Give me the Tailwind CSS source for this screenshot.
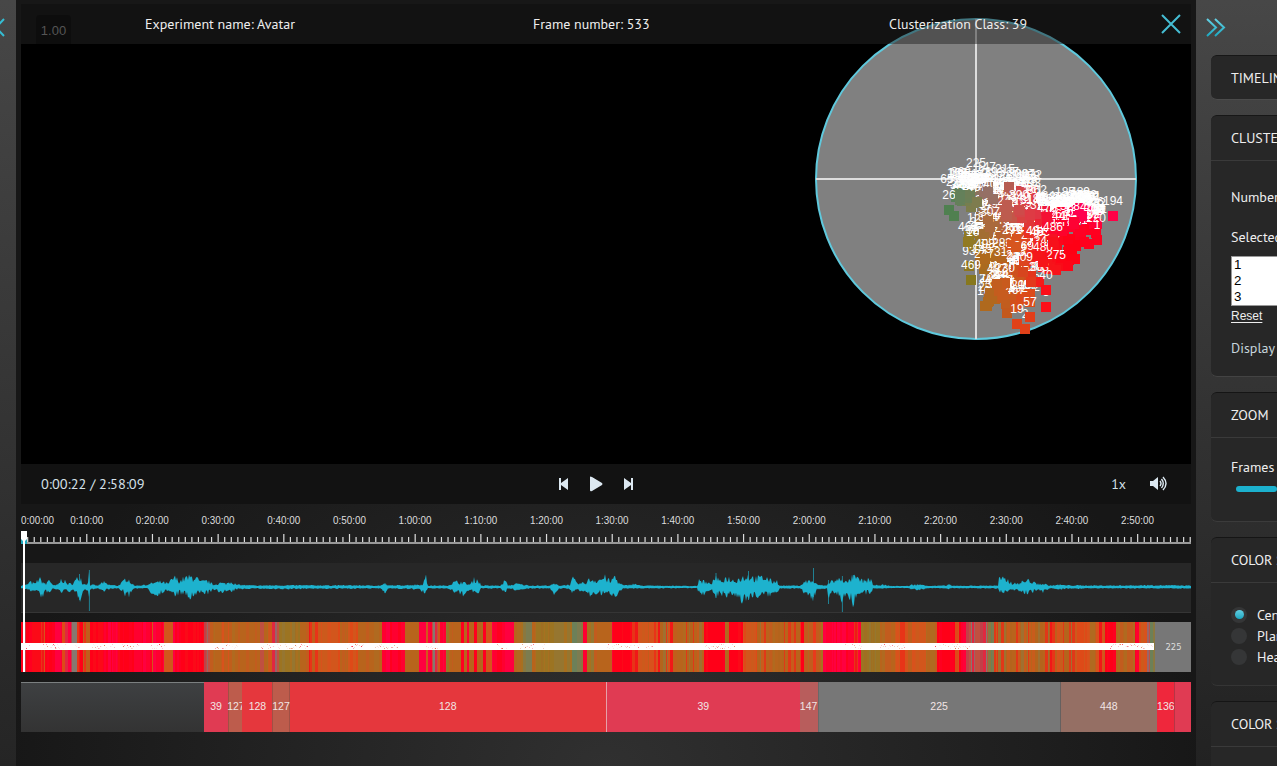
<!DOCTYPE html>
<html lang="en">
<head>
<meta charset="utf-8">
<title>Experiment viewer</title>
<script src="https://cdn.jsdelivr.net/npm/@tailwindcss/browser@4"></script>
</head>
<body class="flex h-[766px] w-[1277px] overflow-hidden bg-[#1b1b1b] font-['PT_Sans','Noto_Sans',sans-serif] text-sm text-[#eeeeee]">
<aside class="flex w-4 shrink-0 overflow-hidden bg-gradient-to-b from-[#474747] to-[#252525]">
  <svg class="mt-[17px] h-5 w-5 shrink-0 overflow-visible" fill="none" stroke="#35bdd3" stroke-width="2"><path d="M4 2L-4 10.5L4 19"/></svg>
</aside>
<main class="relative flex w-[1180px] shrink-0 flex-col bg-[radial-gradient(ellipse_600px_440px_at_50%_100%,#303030,#171717)] px-[5px] pt-1">
  <section class="relative h-[460px] bg-black">
    <svg id="plot" class="absolute inset-0" width="1170" height="460" viewBox="21 4 1170 460">
      <circle cx="976" cy="179" r="160" fill="#808080" stroke="#5fc9dd" stroke-width="2"/>
      <path d="M976 19V339M816 179H1136" stroke="#dddddd" stroke-width="2"/>
      <g id="dots" font-family="Liberation Sans, sans-serif" font-size="12" fill="#ffffff" text-anchor="middle"></g>
    </svg>
    <header class="relative h-10 bg-[#242424]/50">
      <div class="absolute top-[11px] left-[15px] h-[29px] w-[35px] rounded-t bg-[#0d0d0d] pt-[6px] text-center font-['Liberation_Sans',sans-serif] text-[13px] leading-5 text-[#555]">1.00</div>
      <div class="grid h-full grid-cols-[398px_345px_387px_1fr] items-center text-center leading-5">
        <div><svg width="150" height="20" class="inline overflow-visible"><text x="0" y="14" fill="#eee" textLength="150" lengthAdjust="spacingAndGlyphs">Experiment name: Avatar</text></svg></div>
        <div><svg width="117" height="20" class="inline overflow-visible"><text x="0" y="14" fill="#eee" textLength="116.500" lengthAdjust="spacingAndGlyphs">Frame number: 533</text></svg></div>
        <div><svg width="138" height="20" class="inline overflow-visible"><text x="0" y="14" fill="#eee" textLength="138" lengthAdjust="spacingAndGlyphs">Clusterization Class: 39</text></svg></div>
        <svg class="ml-[9px]" width="22" height="22" fill="none" stroke="#45bdd3" stroke-width="2"><path d="M2 2L20 20M20 2L2 20"/></svg>
      </div>
    </header>
  </section>
  <section class="flex h-10 items-center bg-[#121212] pl-5 pr-[23px] text-[#d5e0e8]">
    <svg width="104" height="20"><text x="0" y="15" fill="#d5e0e8" textLength="103.500" lengthAdjust="spacingAndGlyphs">0:00:22 / 2:58:09</text></svg>
    <svg class="ml-[414px]" width="78" height="16" viewBox="0 0 78 16" fill="#dce8f1"><path d="M0 2H2V7L9 2V14L2 9V14H0ZM31 1Q31 0 33 1L43 7Q44 8 43 9L33 15Q31 16 31 14ZM65 2L72 7V2H74V14H72V9L65 14Z"/></svg>
    <span class="ml-auto mr-[24px]">1x</span>
    <svg width="18" height="16" viewBox="0 0 18 16"><path d="M0 5H3L8 1V14L3 10H0Z" fill="#dce8f1"/><path d="M10 5Q12 7.5 10 10M11.5 3Q15 7.5 11.5 12M13 1Q19 7.5 13 14" fill="none" stroke="#dce8f1" stroke-width="1.4"/></svg>
  </section>
  <svg id="ruler" class="h-[59px] w-[1170px]" viewBox="21 504 1170 59" font-family="Liberation Sans, sans-serif" font-size="10.5" fill="#ddd" text-anchor="middle"></svg>
  <svg id="wave" preserveAspectRatio="none" class="mb-[9px] h-[50px] w-[1170px] border-b border-[#353535] bg-[#272727]" viewBox="21 563 1170 49"></svg>
  <svg id="stripes" class="mb-[10px] h-[50px] w-[1170px] bg-[#777]" viewBox="21 622 1170 50" shape-rendering="crispEdges"></svg>
  <div class="flex h-[50px] text-center font-['Liberation_Sans',sans-serif] text-[10.5px] leading-[49px] text-[#f1e5e5]">
    <div class="w-[182.6px] border-t border-[#7b7f80] bg-gradient-to-b from-[#3e4042] to-[#333333]"></div>
    <div class="w-[24.8px] bg-[#e03b53]">39</div>
    <div class="flex w-[14px] justify-center border-l border-[#a05045] bg-[#bd5c4c]">127</div>
    <div class="w-[30px] bg-[#e5373d]">128</div>
    <div class="flex w-[17.2px] justify-center border-x border-[#a05045] bg-[#bd5c4c]">127</div>
    <div class="w-[317.3px] border-r border-[#e6a0a8] bg-[#e5373d]">128</div>
    <div class="w-[192.700px] bg-[#e03b53]">39</div>
    <div class="flex w-[18px] justify-center bg-[#b85d5c]">147</div>
    <div class="w-[242px] border-l border-[#696969] bg-[#777777]">225</div>
    <div class="w-[97.5px] border-l border-[#65605f] bg-[#956f64]">448</div>
    <div class="w-[17px] bg-[#ef273c]">136</div>
    <div class="flex-1 border-l border-[#b63545] bg-[#e03b53]"></div>
  </div>
  <svg class="absolute top-[531px] left-[5px]" width="7" height="141"><path d="M0 6h6v7H0z" fill="#20a9be"/><path d="M0 0H6V8L4 10V141H2V10L0 8Z" fill="#fff"/></svg>
</main>
<aside class="flex min-w-0 flex-1 flex-col gap-[15px] overflow-hidden bg-gradient-to-b from-[#474747] to-[#222222] pl-[15px] leading-5 whitespace-nowrap">
  <svg class="mt-[18px] -mb-[3px] -ml-[5px] h-[21px] w-5 shrink-0" fill="none" stroke-width="2"><defs><linearGradient id="cy" gradientUnits="userSpaceOnUse" x1="0" y1="0" x2="0" y2="20"><stop stop-color="#69d3e6"/><stop offset="1" stop-color="#14a5bf"/></linearGradient></defs><path d="M1 1L10 9.5L1 18M9 1L18 9.5L9 18" stroke="url(#cy)"/></svg>
  <section class="mt-[4px] h-[45px] shrink-0 rounded-l-md border-t border-b border-t-[#171717] border-b-[#4b4b4b] bg-[#272727] py-3 pl-5">TIMELINE</section>
  <section class="h-[262px] shrink-0 rounded-l-md border-t border-b border-t-[#171717] border-b-[#434343] bg-[#272727]">
    <h2 class="h-[45px] border-b border-[#3a3a3a] pt-3 pl-5">CLUSTERS</h2>
    <div class="flex flex-col items-start pt-[26px] pl-5">
      <span>Number of clusters</span>
      <span class="mt-5">Selected</span>
      <div class="mt-[9px] h-[50px] w-[150px] border border-[#999] bg-white pl-[2px] font-['Liberation_Sans',sans-serif] text-[13.3px] leading-4 text-black"><p>1</p><p>2</p><p>3</p></div>
      <a class="mt-px font-['Liberation_Sans',sans-serif] text-xs/[18px] underline underline-offset-2">Reset</a>
      <span class="mt-[13px] text-[#c6d5dc]">Display</span>
    </div>
  </section>
  <section class="h-[130px] shrink-0 rounded-l-md border-t border-b border-t-[#151515] border-b-[#3b3b3b] bg-[#272727]">
    <h2 class="h-[45px] border-b border-[#3a3a3a] pt-3 pl-5">ZOOM</h2>
    <div class="pt-[19px] pl-5">Frames<div class="mt-[9px] ml-[5px] h-[6px] rounded-full bg-[#1cb1ce]"></div></div>
  </section>
  <section class="h-[149px] shrink-0 rounded-l-md border-t border-b border-t-[#151515] border-b-[#353535] bg-[#272727]">
    <h2 class="h-[45px] border-b border-[#3a3a3a] pt-3 pl-5">COLOR SCHEME</h2>
    <div class="flex flex-col gap-px pt-[22px] pl-5">
      <div class="flex items-center gap-[10px]"><i class="flex size-4 shrink-0 items-center justify-center rounded-full bg-[#353637]"><i class="mb-px size-[9px] rounded-full bg-gradient-to-b from-[#61cfe2] to-[#12a6c0]"></i></i>Centers</div>
      <div class="flex items-center gap-[10px]"><i class="size-4 shrink-0 rounded-full bg-[#353637]"></i>Plane</div>
      <div class="flex items-center gap-[10px]"><i class="size-4 shrink-0 rounded-full bg-[#353637]"></i>Heat</div>
    </div>
  </section>
  <section class="min-h-0 flex-1 rounded-tl-md border-t border-[#151515] bg-[#272727]">
    <h2 class="h-[45px] border-b border-[#3a3a3a] pt-3 pl-5">COLOR SCALE</h2>
  </section>
</aside>
<script>
let seed = 7;
const rnd = () => (seed = (seed * 16807) % 2147483647) / 2147483647;
const $ = id => document.getElementById(id);

// time ruler
let s = '<rect x="21" y="542" width="1170" height="2" fill="#999"/>';
for (let i = 0; i < 179; i++) {
  const x = 21 + i * 6.568, big = i % 10 === 0;
  s += `<rect x="${x - .5}" y="${big ? 534 : 537}" width="1.2" height="${big ? 8 : 5}" fill="#ddd"/>`;
  if (big) {
    const t = `${Math.floor(i / 60)}:${String(i % 60).padStart(2, '0')}:00`;
    s += `<text x="${i ? x : 37.5}" y="524" textLength="33" lengthAdjust="spacingAndGlyphs">${t}</text>`;
  }
}
$('ruler').innerHTML = s;

// audio waveform: x, extent above, extent below
const env = [[21,1,1],[27,2,2],[30,5,4],[35,3,3],[39,9,6],[43,5,12],[46,2,3],[49,9,8],[53,1,1],[58,2,3],[62,9,5],[67,3,3],[72,3,5],[76,7,6],[80,12,13],[83,3,3],[88,4,3],[89,18,25],[90,2,2],[98,1,1],[103,5,4],[108,2,2],[118,1,1],[123,5,4],[127,11,12],[130,6,7],[134,1,1],[148,2,1],[153,4,9],[161,5,6],[168,3,3],[174,10,9],[180,6,6],[184,9,8],[190,10,12],[195,11,9],[200,5,6],[208,6,6],[213,2,3],[220,4,5],[226,3,4],[231,6,6],[236,2,2],[255,1,1],[275,1.3,2],[310,1.3,1.3],[345,1.3,1.3],[380,1,1],[385,3,5],[388,1,1],[418,2,2],[422,2,4],[426,10,8],[428,1,1],[447,1,1],[455,5,5],[461,5,9],[470,2,3],[475,9,7],[479,6,5],[481,1,1],[501,1,1],[505,7,7],[508,1,1],[517,3,3],[530,1,1],[550,1,1],[554,3,7],[559,1,1],[570,2,2],[573,9,6],[577,3,3],[585,4,5],[590,8,9],[597,7,6],[605,10,8],[611,5,6],[614,12,12],[619,4,4],[624,1,1],[635,3,1.5],[640,1,1],[697,.6,.6],[699,6,6],[704,6,7],[708,3,3],[714,6,5],[716,12,10],[719,5,6],[727,10,10],[733,7,8],[740,9,15],[748,12,12],[755,9,9],[766,10,9],[771,6,8],[777,6,6],[780,1,1],[800,1,1],[806,6,8],[813,6,12],[817,2,2],[827,1,1],[828,3,17],[830,6,6],[836,6,5],[842,10,14],[847,4,6],[853,11,17],[858,8,8],[864,6,6],[871,9,8],[873,1,1],[882,2,1],[890,.6,.6],[909,.6,.6],[912,2,3],[925,2,2],[928,.7,.7],[947,1,1],[949,3,2],[952,.7,.7],[990,1,1],[998,1,1],[999,8,5],[1006,8,6],[1014,3,3],[1022,5,6],[1029,7,6],[1036,3,4],[1043,3,5],[1050,1,1],[1060,2,2],[1065,1.3,1.3],[1080,1.2,1.2],[1110,1,1],[1150,1.5,1],[1191,1,1]];
let up = '', dn = '', k = 0;
for (let x = 21; x <= 1191; x++) {
  while (k < env.length - 2 && env[k + 1][0] < x) k++;
  const a = env[k], b = env[k + 1], t = (x - a[0]) / (b[0] - a[0]);
  const u = (a[1] + (b[1] - a[1]) * t) * (.4 + .85 * rnd()), d = (a[2] + (b[2] - a[2]) * t) * (.35 + .85 * rnd());
  up += `L${x} ${(586.5 - u).toFixed(1)}`;
  dn = `L${x} ${(587.5 + d).toFixed(1)}` + dn;
}
s = `<path d="M21 587${up}${dn}Z" fill="#1db2ce"/>`;
[[89.4, 570, 611], [79.5, 574, 600], [813.5, 568, 597], [828.5, 580, 604], [842.4, 576, 612], [853.5, 575, 605], [385, 583, 593], [748.5, 571, 600], [716, 573, 598]].forEach(([x, a, b]) => s += `<path d="M${x} ${a}V${b}" stroke="#1db2ce" stroke-opacity=".65"/>`);
$('wave').innerHTML = s;

// class stripes: end x and palette key of each run
const pal = {
  R: ['#ff0018', '#ff0018', '#ff0020', '#fb0a18'], P: ['#ff0030', '#ff0030', '#ff0040', '#ff0020'],
  Q: ['#ff0038', '#ff0018', '#e83a1c', '#ff0030'], X: ['#9a6468', '#c04048', '#c05040', '#e02840', '#867870'],
  O: ['#d8521c', '#d2561c', '#de4a18', '#cc5a1c'], M: ['#d8521c', '#f01818', '#c05e1c', '#e83418'],
  B: ['#b8641c', '#b8641c', '#c25c1e', '#b06a20'], L: ['#9c7422', '#a06e22', '#a87020', '#967630'],
  T: ['#6c8058', '#7c7c50', '#a87020', '#8a7840'], W: ['#b8641c', '#c85c1c', '#e03818', '#a07030', '#b4641c'], N: ['#777777']
};
const runs = '23Q 26X 41R 45M 55R 62P 65O 68X 71P 77X 80M 83R 90M 104R 118P 134R 152P 153O 164P 173O 181P 204R 207X 210X 222B 232M 260B 264X 268B 272O 279X 300L 309B 318M 340O 348B 358O 382B 405P 419B 426P 428O 432P 438X 440O 446P 449L 461B 464P 467B 469P 474B 477R 483B 486P 492O 514P 521B 532T 536B 545L 560L 572L 583T 587P 594L 612B 614Q 632R 640M 648O 660M 668W 677M 686B 704W 725R 729B 743R 757O 766W 775B 800W 804Q 813B 816Q 821B 823T 854P 858M 861P 866L 880L 895B 900O 912M 926O 937B 955R 959O 966Q 972X 988X 994T 1013W 1028W 1050W 1060M 1075W 1090O 1095B 1105M 1116R 1135B 1139P 1147O 1150X 1155T 1191N'.split(' ');
let px = 21; s = '';
for (const r of runs) {
  const end = parseInt(r), p = pal[r.slice(-1)];
  while (px < end) {
    const w = Math.min(end - px, r.endsWith('N') ? 99 : 1 + Math.floor(rnd() * 3));
    s += `<rect x="${px}" y="622" width="${w}" height="50" fill="${p[Math.floor(rnd() * p.length)]}"/>`;
    px += w;
  }
}
s += '<rect x="21" y="643" width="1133" height="7" fill="#fff"/>';
const specks = [[26, 30], [42, 60], [55, 67], [75, 80], [92, 115], [122, 140], [150, 165], [215, 238], [260, 310], [345, 365], [375, 400], [425, 440], [497, 507], [520, 545], [606, 640], [645, 655], [705, 735], [845, 862], [880, 905], [935, 970], [1110, 1154]];
for (const [a, b] of specks) for (let x = a; x < b; x++) if (rnd() < .8)
  s += `<rect x="${x}" y="${644 + Math.floor(rnd() * 5)}" width="1" height="1" fill="${rnd() < .5 ? '#ff3050' : '#e06a3c'}" fill-opacity="${(rnd() * rnd()).toFixed(2)}"/>`;
s += '<text x="1173.500" y="650" text-anchor="middle" font-family="DejaVu Sans, sans-serif" font-size="8.500" fill="#ddd" textLength="16" lengthAdjust="spacingAndGlyphs">225</text>';
$('stripes').innerHTML = s;

// scatter of cluster centres
const keys = [[949,211,79,128,80],[947,194,40,128,85],[962,198,100,128,90],[970,205,125,125,75],[969,242,145,122,35],[969,280,135,120,30],[987,192,149,112,101],[992,223,170,106,60],[990,255,175,105,30],[990,306,175,105,30],[1010,290,200,90,30],[1007,205,190,92,80],[1030,205,222,60,70],[1020,245,215,85,30],[1035,240,235,45,35],[1030,300,220,75,25],[1047,202,240,20,60],[1045,250,248,15,25],[1050,290,252,15,25],[1047,307,252,15,25],[1070,250,255,0,20],[1090,240,255,0,30],[1085,208,255,0,80],[1113,216,255,0,70],[1025,329,225,65,25],[1060,222,255,0,45]];
const col = (x, y) => {
  let w = 0, c = [0, 0, 0];
  for (const q of keys) { const g = 1 / (((x - q[0]) ** 2 + (y - q[1]) ** 2) ** 2 + 200); w += g; for (let i = 0; i < 3; i++) c[i] += g * q[i + 2]; }
  return `rgb(${c.map(v => Math.round(v / w))})`;
};
const pts = [];
const bands = [[191,958,990,16],[192,990,1036,10],[198,955,1038,20],[204,962,1040,16],[211,980,1040,20],[214,1044,1094,22],[221,1040,1098,30],[219,980,1040,20],[228,980,1096,28],[237,968,1098,36],[246,972,1094,34],[256,980,1082,30],[266,982,1068,18],[276,984,1046,14],[286,986,1040,14],[296,986,1034,12],[303,986,1030,12]];
for (const [y, a, b, n] of bands) for (let i = 0; i < n; i++) {
  const x = a + rnd() * (b - a), yy = y + rnd() * 10 - 5;
  const p = x > 1042 && y > 240 ? .12 : y < 230 ? .95 : .75;
  pts.push([x, yy, rnd() < p ? 100 + Math.floor(rnd() * 400) : '']);
}
for (let i = pts.length - 1; i > 0; i--) {
  const j = Math.floor(rnd() * (i + 1));
  [pts[i], pts[j]] = [pts[j], pts[i]];
}
const named = [[969,266,'93'],[968,242,'464'],[949,210,'26'],[954,216,''],[960,197,''],[988,192,''],[1007,205,''],[971,280,'469'],[985,259,'498'],[985,306,''],[997,284,'487'],[1007,313,''],[1017,324,'19'],[1025,329,'2'],[1030,317,'57'],[1046,307,'3'],[1046,290,'40'],[1043,262,'480'],[1053,242,'486'],[1097,240,'1'],[1075,259,''],[1068,266,''],[1080,208,''],[1047,217,''],[1113,216,'194']];
const labels = [[976,167,'225'],[1005,173,'215'],[957,177,'168'],[947,183,'65'],[986,171,'147'],[1027,183,'393'],[1037,194,'362'],[1065,196,'185'],[1080,196,'489'],[1085,202,'239'],[966,186,'371'],[972,190,'284'],[963,189,'462'],[1060,207,'431'],[1070,210,'328'],[1090,211,'458']];
$('dots').innerHTML = pts.concat(named).map(([x, y, l]) =>
  `<rect x="${Math.round(x) - 5}" y="${Math.round(y) - 5}" width="10" height="10" fill="${col(x, y)}"/>` + (l === '' ? '' : `<text x="${Math.round(x)}" y="${Math.round(y) - 11}">${l}</text>`)
).join('') + labels.map(([x, y, l]) => `<text x="${x}" y="${y}">${l}</text>`).join('');
</script>
</body>
</html>
